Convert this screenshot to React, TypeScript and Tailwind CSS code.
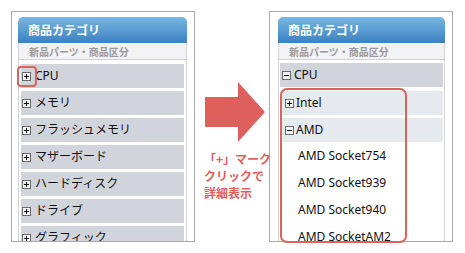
import React from "react";

const font = { fontFamily: '"Noto Sans", "Noto Sans CJK JP", sans-serif' };

function Plus() {
  return (
    <svg width="9" height="9" viewBox="0 0 9 9" className="shrink-0">
      <rect x="0.5" y="0.5" width="8" height="8" fill="#f4f4f4" stroke="#6b6b6b" />
      <path d="M2 4.5h5M4.5 2v5" stroke="#111" strokeWidth="1" />
    </svg>
  );
}
function Minus() {
  return (
    <svg width="9" height="9" viewBox="0 0 9 9" className="shrink-0">
      <rect x="0.5" y="0.5" width="8" height="8" fill="#f4f4f4" stroke="#6b6b6b" />
      <path d="M2 4.5h5" stroke="#111" strokeWidth="1" />
    </svg>
  );
}

function Header() {
  return (
    <>
      <div className="h-[26px] rounded-t-[5px] bg-gradient-to-b from-[#78b8e2] to-[#3d80c1] flex items-center pl-[10px] text-white font-bold text-[12px]" style={{ fontFamily: '"Noto Sans CJK JP", sans-serif' }}>
        商品カテゴリ
      </div>
      <div className="h-[17px] bg-[#f3f3f5] border-b border-[#cfcfd3] border-x border-x-[#d4d4d8] flex items-center pl-[10px] text-[10px] font-bold text-[#9a9a9e]" style={{ fontFamily: '"Noto Sans CJK JP", sans-serif' }}>
        新品パーツ・商品区分
      </div>
    </>
  );
}

const leftItems = ["CPU", "メモリ", "フラッシュメモリ", "マザーボード", "ハードディスク", "ドライブ", "グラフィック"];

export default function App() {
  return (
    <div className="relative w-[465px] h-[253px] bg-white overflow-hidden" style={font}>
      <div className="flex pt-[11px] pl-[11px]">
        {/* Left panel */}
        <div className="w-[184px] h-[231px] border border-[#a9a9a9] overflow-hidden pt-[5px] pl-[6px] pr-[7px]">
          <Header />
          <div className="border-x border-[#d4d4d8] h-[200px] flex flex-col gap-[3px] pt-[4px] px-[2px]">
            {leftItems.map((t) => (
              <div key={t} className="h-[24px] shrink-0 bg-[#d1d5db] flex items-center pl-[1px] gap-[4px] text-[12px] text-[#111]">
                <Plus />
                <span>{t}</span>
              </div>
            ))}
          </div>
        </div>

        {/* Middle */}
        <div className="w-[74px] flex flex-col pt-[71px] pl-[10px]">
          <svg width="60" height="62" viewBox="0 0 60 62">
            <path d="M0 15H33V0L60 30L33 60V45H0Z" fill="#dd605c" />
          </svg>
          <div className="mt-[6px] text-[12px] leading-[17px] font-bold text-[#e0615c] whitespace-nowrap -ml-[1px]" style={{ fontFamily: '"Noto Sans CJK JP", sans-serif' }}>
            <div>「+」マーク</div>
            <div>クリックで</div>
            <div>詳細表示</div>
          </div>
        </div>

        {/* Right panel */}
        <div className="w-[184px] h-[231px] border border-[#a9a9a9] overflow-hidden pt-[5px] pl-[8px] pr-[7px]">
          <Header />
          <div className="border-x border-[#d4d4d8] h-[200px] flex flex-col pt-[3px] px-[1px]">
            <div className="h-[24px] shrink-0 bg-[#d1d5db] flex items-center pl-[2px] gap-[3px] text-[12px] text-[#111]">
              <Minus />
              <span>CPU</span>
            </div>
            <div className="mt-[4px] h-[24px] shrink-0 bg-[#e6e9ed] flex items-center pl-[5px] gap-[2px] text-[12px] text-[#111]">
              <Plus />
              <span>Intel</span>
            </div>
            <div className="mt-[3px] h-[24px] shrink-0 bg-[#e6e9ed] flex items-center pl-[5px] gap-[2px] text-[12px] text-[#111]">
              <Minus />
              <span>AMD</span>
            </div>
            <div className="flex flex-col pl-[18px] text-[12px] text-[#111]">
              {["AMD Socket754", "AMD Socket939", "AMD Socket940", "AMD SocketAM2"].map((t) => (
                <div key={t} className="h-[27px] flex items-center">{t}</div>
              ))}
            </div>
          </div>
        </div>
      </div>

      {/* Red highlight overlays */}
      <div className="absolute left-[17px] top-[66px] w-[20px] h-[21px] border-2 border-[#dc625e] rounded-[4px]" />
      <div className="absolute left-[280px] top-[88px] w-[127px] h-[155px] border-2 border-[#dc625e] rounded-[7px]" />
    </div>
  );
}
